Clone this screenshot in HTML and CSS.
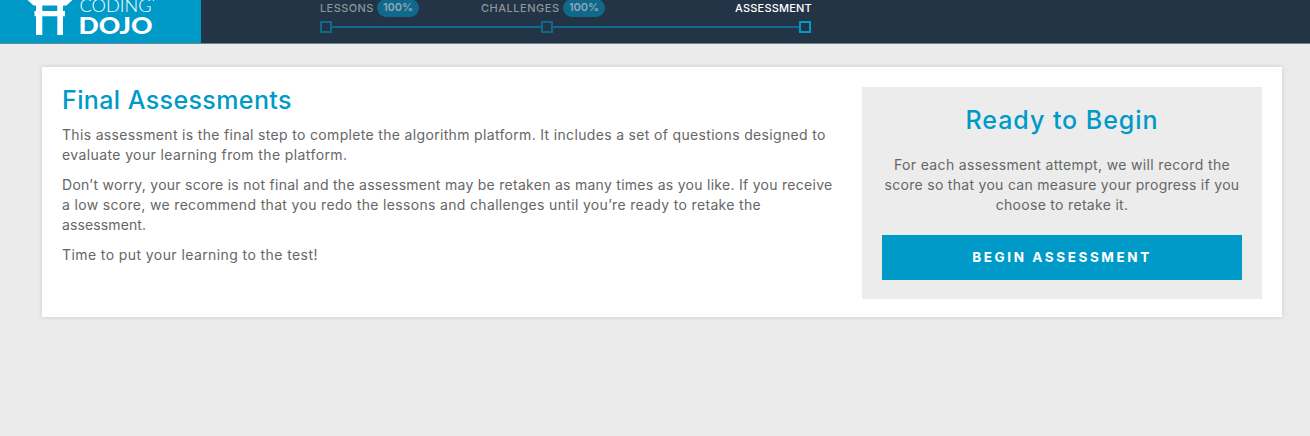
FILE: index.html
```html
<!DOCTYPE html>
<html lang="en">
<head>
<meta charset="utf-8">
<title>Final Assessments</title>
<link rel="stylesheet" href="styles.css">
</head>
<body>
<header class="topbar">
  <a class="logo">
    <svg width="201" height="43" viewBox="0 0 201 43" fill="#fff">
      <path d="M25 -2H75L72.500 0Q69 3 66.500 5.500H33.500Q31 3 27.500 0Z"/>
      <path d="M36 5H42.300V11H57.300V5H63V11H65V16.300H63V35H57.300V16.300H42.300V35H36V16.300H34.500V11H36Z"/>
      <text class="logo-light" x="79.500" y="12" textLength="72" lengthAdjust="spacingAndGlyphs">CODING</text>
      <text class="logo-bold" x="78.500" y="34" textLength="74" lengthAdjust="spacingAndGlyphs">DOJO</text>
      <circle cx="153.500" cy="0.500" r=".7" opacity=".7"/>
    </svg>
  </a>
  <nav class="steps">
    <div class="step step-lessons"><span class="label l1">LESSONS</span><span class="pill">100%</span></div>
    <div class="step step-challenges"><span class="label l2">CHALLENGES</span><span class="pill">100%</span></div>
    <div class="step step-assessment"><span class="label l3">ASSESSMENT</span></div>
    <div class="track"><i class="node"></i><i class="line line-a"></i><i class="node"></i><i class="line line-b"></i><i class="node active"></i></div>
  </nav>
</header>
<main class="card">
  <section class="intro">
    <h1 class="title t1">Final Assessments</h1>
    <p class="copy"><span class="c1">This assessment is the final step to complete the algorithm platform. It includes a set of questions designed to</span><br><span class="c2">evaluate your learning from the platform.</span></p>
    <p class="copy"><span class="c3">Don’t worry, your score is not final and the assessment may be retaken as many times as you like. If you receive</span><br><span class="c4">a low score, we recommend that you redo the lessons and challenges until you’re ready to retake the</span><br><span class="c5">assessment.</span></p>
    <p class="copy"><span class="c6">Time to put your learning to the test!</span></p>
  </section>
  <aside class="ready">
    <h2 class="title t2">Ready to Begin</h2>
    <p class="copy"><span class="c7">For each assessment attempt, we will record the</span><br><span class="c8">score so that you can measure your progress if you</span><br><span class="c9">choose to retake it.</span></p>
    <button class="begin">BEGIN ASSESSMENT</button>
  </aside>
</main>
</body>
</html>
```
FILE: styles.css
```css
* { box-sizing: border-box; }
body { margin: 0; height: 436px; overflow: hidden; background: #ebebeb; color: #666; font-family: Inter, "Liberation Sans", sans-serif; }
.topbar { display: flex; height: 44px; background: #223445; border-bottom: 1px solid #70838f; overflow: hidden; }
.logo { width: 201px; height: 43px; background: #009ac9; }
.logo svg { display: block; }
.logo-light { font: 300 17px Lato, sans-serif; }
.logo-bold { font: 900 23.5px Lato, sans-serif; }
.steps { display: grid; grid-template-columns: 161px 254px 78px; grid-template-rows: 20px 14px; margin-left: 119px; height: 43px; }
.step { display: flex; height: 17px; gap: 3px; white-space: nowrap; }
.label { font-size: 11px; font-weight: 500; line-height: 16px; color: #8d969e; }
.l1 { width: 54px; letter-spacing: .4px; }
.l2 { width: 79px; letter-spacing: .52px; }
.l3 { letter-spacing: .2px; }
.step-assessment .label { color: #fff; }
.pill { width: 42px; height: 18px; margin-top: -1px; border-radius: 9px; background: #10698b; color: #8fa6b4; font-size: 11px; font-weight: 600; line-height: 17px; text-align: center; }
.track { grid-column: 1 / 4; display: flex; align-items: center; height: 14px; }
.node { width: 12px; height: 12px; border: 2px solid #10698b; }
.node.active { border-color: #009ac9; }
.line { height: 2px; background: #10698b; }
.line-a { width: 209px; }
.line-b { width: 246px; }
.card { display: flex; justify-content: space-between; width: 1240px; height: 250px; margin: 23px 0 0 42px; padding: 20px; background: #fff; box-shadow: 0 0 5px rgba(0,0,0,.13); }
.intro { width: 780px; }
.title { margin: 0; color: #009ac9; font-size: 25px; font-weight: 500; line-height: 26px; }
.copy { margin: 0 0 10px; font-size: 14px; line-height: 20px; white-space: nowrap; }
.t1 { margin-bottom: 12px; letter-spacing: .4px; }
.c1 { letter-spacing: .33px; }
.c2 { letter-spacing: .39px; }
.c3 { letter-spacing: .277px; }
.c4 { letter-spacing: .33px; }
.c5 { letter-spacing: .12px; }
.c6 { letter-spacing: .41px; }
.c7 { letter-spacing: .35px; }
.c8 { letter-spacing: .29px; }
.c9 { letter-spacing: .31px; }
.ready { width: 400px; height: 212px; padding: 20px; background: #ececec; text-align: center; }
.t2 { margin-bottom: 22px; letter-spacing: .95px; }
.ready .copy { margin-bottom: 20px; }
.begin { display: block; width: 360px; height: 45px; border: 0; padding: 0; background: #009ac9; color: #fff; font: 700 13.5px/45px Inter, sans-serif; letter-spacing: 2.6px; }
```
